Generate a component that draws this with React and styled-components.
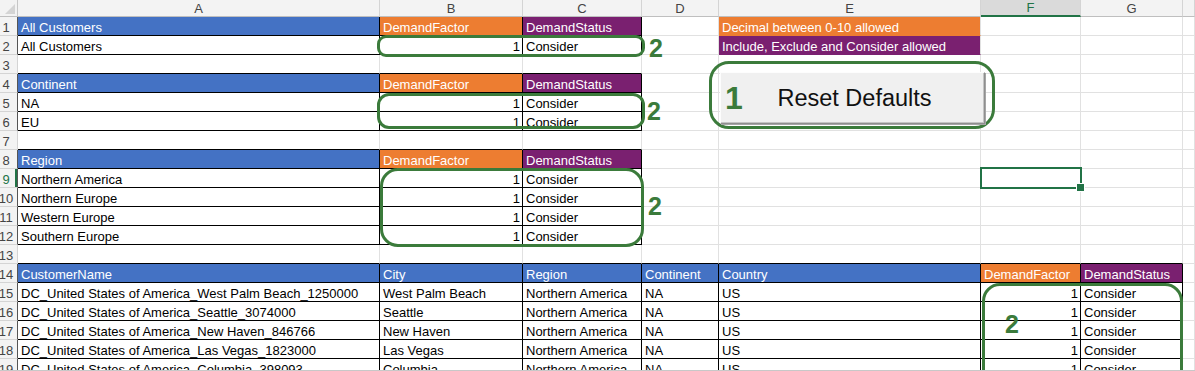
import styled, { createGlobalStyle } from "styled-components";

const BLUE = "#4472c4";
const ORANGE = "#ed7d31";
const PURPLE = "#7a2070";
const GRID = "#e1e1e1";
const INK = "#3b7b3b";
const XL = "#217346";

const GlobalStyle = createGlobalStyle`
  body {
    margin: 0;
    background: #fff;
    font-family: "Liberation Sans", Arial, sans-serif;
  }
  * { box-sizing: border-box; }
`;

const letters = ["A", "B", "C", "D", "E", "F", "G", ""];

const head = (a, b, c) => [
  { t: a, bg: BLUE },
  { t: b || "DemandFactor", bg: ORANGE },
  { t: c || "DemandStatus", bg: PURPLE },
];
const line = (name) => [{ t: name }, { t: "1", right: true }, { t: "Consider" }];
const customer = (name, city) => [
  { t: `DC_United States of America_${name}` },
  { t: city },
  { t: "Northern America" },
  { t: "NA" },
  { t: "US" },
  { t: "1", right: true },
  { t: "Consider" },
];

const rows = {
  1: [...head("All Customers"), {}, { t: "Decimal between 0-10 allowed", bg: ORANGE }],
  2: [...line("All Customers"), {}, { t: "Include, Exclude and Consider allowed", bg: PURPLE }],
  4: head("Continent"),
  5: line("NA"),
  6: line("EU"),
  8: head("Region"),
  9: line("Northern America"),
  10: line("Northern Europe"),
  11: line("Western Europe"),
  12: line("Southern Europe"),
  14: [
    { t: "CustomerName", bg: BLUE },
    { t: "City", bg: BLUE },
    { t: "Region", bg: BLUE },
    { t: "Continent", bg: BLUE },
    { t: "Country", bg: BLUE },
    { t: "DemandFactor", bg: ORANGE },
    { t: "DemandStatus", bg: PURPLE },
  ],
  15: customer("West Palm Beach_1250000", "West Palm Beach"),
  16: customer("Seattle_3074000", "Seattle"),
  17: customer("New Haven_846766", "New Haven"),
  18: customer("Las Vegas_1823000", "Las Vegas"),
  19: customer("Columbia_398093", "Columbia"),
};

// ranges that carry thin black borders: [row1, row2, col1, col2]
const tables = [
  [1, 2, 0, 2],
  [4, 6, 0, 2],
  [8, 12, 0, 2],
  [14, 19, 0, 6],
];

function boxed(r, c) {
  return tables.some(([r1, r2, c1, c2]) => r >= r1 && r <= r2 && c >= c1 && c <= c2);
}

// green hand-drawn style callouts: outline box + "2" beside it
const callouts = [
  { x: 377, y: 35, w: 268, h: 22, r: 9, gap: 4, dy: 1 },
  { x: 377, y: 93, w: 268, h: 36, r: 12, gap: 2, dy: 6 },
  { x: 380, y: 168, w: 264, h: 79, r: 18, gap: 4, dy: 26 },
];

const Viewport = styled.div`
  position: relative;
  width: 1195px;
  height: 371px;
  overflow: hidden;
  border-bottom: 1px solid #c8c8c8;
`;

const Sheet = styled.div`
  display: grid;
  grid-template-columns: 18px 362px 143px 119px 77px 262px 100px 102px 12px;
  grid-template-rows: 17px;
  grid-auto-rows: 19px;
  font-size: 13px;
`;

const Corner = styled.div`
  position: relative;
  background: #f3f3f3;
  border-right: 1px solid #c6c6c6;
  border-bottom: 1px solid #bfbfbf;
  &::after {
    content: "";
    position: absolute;
    right: 2px;
    bottom: 2px;
    border-style: solid;
    border-width: 0 0 10px 10px;
    border-color: transparent transparent #d4d4d4 transparent;
  }
`;

const ColHead = styled.div`
  background: ${(p) => (p.$active ? "#dadada" : "#f3f3f3")};
  color: ${(p) => (p.$active ? XL : "#444")};
  border-right: 1px solid #d4d4d4;
  border-bottom: ${(p) => (p.$active ? `2px solid ${XL}` : "1px solid #bfbfbf")};
  display: flex;
  align-items: center;
  justify-content: center;
  line-height: 15px;
`;

const RowHead = styled.div`
  background: #f3f3f3;
  color: ${(p) => (p.$active ? XL : "#444")};
  border-right: 1px solid ${(p) => p.$edge};
  border-bottom: 1px solid #d4d4d4;
  box-shadow: ${(p) => (p.$active ? `inset -2px 0 ${XL}` : "none")};
  display: flex;
  align-items: flex-end;
  justify-content: center;
  padding-right: 5px;
  line-height: 15px;
  white-space: nowrap;
`;

const Cell = styled.div`
  background: ${(p) => p.$bg || "#fff"};
  color: ${(p) => (p.$bg ? "#fff" : "#000")};
  border-right: 1px solid ${(p) => p.$rb};
  border-bottom: 1px solid ${(p) => p.$bb};
  display: flex;
  align-items: flex-end;
  justify-content: ${(p) => (p.$right ? "flex-end" : "flex-start")};
  padding: 0 2px 0 3px;
  line-height: 15px;
  white-space: nowrap;
  overflow: hidden;
`;

const Callout = styled.div`
  position: absolute;
  left: ${(p) => p.$x}px;
  top: ${(p) => p.$y}px;
  display: flex;
  align-items: flex-start;
  gap: ${(p) => p.$gap}px;
  pointer-events: none;
`;

const Outline = styled.div`
  width: ${(p) => p.$w}px;
  height: ${(p) => p.$h}px;
  border: 3px solid ${INK};
  border-radius: ${(p) => p.$r}px;
  padding: ${(p) => p.$pad || "0"};
`;

const Mark = styled.span`
  display: block;
  margin-top: ${(p) => p.$dy || 0}px;
  color: ${INK};
  font-weight: 700;
  font-size: ${(p) => p.$size || 25}px;
  line-height: 1;
`;

const ButtonFrame = styled.div`
  position: absolute;
  left: 709px;
  top: 61px;
  width: 286px;
  height: 68px;
  border: 3px solid ${INK};
  border-radius: 20px;
  padding: 8px 7px 0 8px;
`;

const ResetButton = styled.button`
  width: 265px;
  height: 52px;
  display: grid;
  grid-template-columns: 1fr auto 1fr;
  align-items: center;
  padding: 0 0 0 4px;
  background: #f0f0f0;
  border: 1px solid;
  border-color: #fdfdfd #8f8f8f #8f8f8f #fdfdfd;
  box-shadow: 1px 1px 0 #a6a6a6, inset -1px -1px 0 #c4c4c4;
  font-family: "Liberation Sans", Arial, sans-serif;
  font-size: 23.5px;
  color: #111;
  text-align: left;
`;

const Selection = styled.div`
  position: absolute;
  left: 980px;
  top: 167px;
  width: 102px;
  height: 22px;
  border: 2px solid ${XL};
  &::after {
    content: "";
    position: absolute;
    right: -5px;
    bottom: -5px;
    width: 7px;
    height: 7px;
    background: ${XL};
    border: 1px solid #fff;
  }
`;

function Row({ r }) {
  const data = rows[r] || [];
  return (
    <>
      <RowHead $active={r === 9} $edge={boxed(r, 0) ? "#555" : "#d4d4d4"}>
        {r}
      </RowHead>
      {letters.map((_, c) => {
        const cell = data[c] || {};
        const own = boxed(r, c);
        let rb = own || boxed(r, c + 1) ? "#000" : GRID;
        let bb = own || boxed(r + 1, c) ? "#000" : GRID;
        if (cell.bg && !own) {
          rb = GRID;
          bb = cell.bg;
        }
        return (
          <Cell key={c} $bg={cell.bg} $right={cell.right} $rb={rb} $bb={bb}>
            {cell.t}
          </Cell>
        );
      })}
    </>
  );
}

export default function App() {
  const nums = Array.from({ length: 19 }, (_, i) => i + 1);
  return (
    <Viewport>
      <GlobalStyle />
      <Sheet>
        <Corner />
        {letters.map((l, i) => (
          <ColHead key={i} $active={l === "F"}>
            {l}
          </ColHead>
        ))}
        {nums.map((r) => (
          <Row key={r} r={r} />
        ))}
      </Sheet>

      <Selection />

      <ButtonFrame>
        <ResetButton>
          <Mark $size={32}>1</Mark>
          <span>Reset Defaults</span>
          <span />
        </ResetButton>
      </ButtonFrame>

      {callouts.map((c, i) => (
        <Callout key={i} $x={c.x} $y={c.y} $gap={c.gap}>
          <Outline $w={c.w} $h={c.h} $r={c.r} />
          <Mark $dy={c.dy}>2</Mark>
        </Callout>
      ))}
      <Callout $x={982} $y={283} $gap={0}>
        <Outline $w={201} $h={130} $r={18} $pad="26px 0 0 20px">
          <Mark>2</Mark>
        </Outline>
      </Callout>
    </Viewport>
  );
}
